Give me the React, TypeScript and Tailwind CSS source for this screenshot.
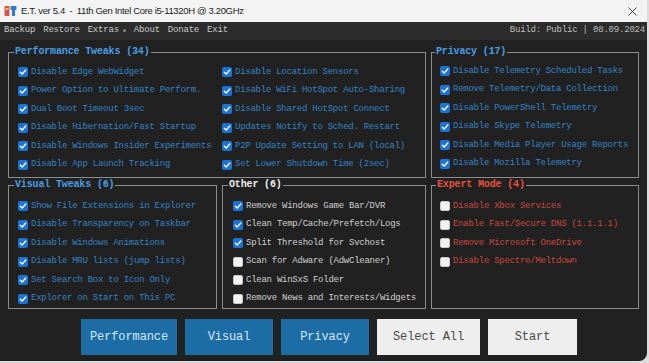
import React from "react";

type Item = { label: string; checked: boolean };

const perfCol1: string[] = [
  "Disable Edge WebWidget",
  "Power Option to Ultimate Perform.",
  "Dual Boot Timeout 3sec",
  "Disable Hibernation/Fast Startup",
  "Disable Windows Insider Experiments",
  "Disable App Launch Tracking",
];
const perfCol2: string[] = [
  "Disable Location Sensors",
  "Disable WiFi HotSpot Auto-Sharing",
  "Disable Shared HotSpot Connect",
  "Updates Notify to Sched. Restart",
  "P2P Update Setting to LAN (local)",
  "Set Lower Shutdown Time (2sec)",
];
const privacy: string[] = [
  "Disable Telemetry Scheduled Tasks",
  "Remove Telemetry/Data Collection",
  "Disable PowerShell Telemetry",
  "Disable Skype Telemetry",
  "Disable Media Player Usage Reports",
  "Disable Mozilla Telemetry",
];
const visual: string[] = [
  "Show File Extensions in Explorer",
  "Disable Transparency on Taskbar",
  "Disable Windows Animations",
  "Disable MRU lists (jump lists)",
  "Set Search Box to Icon Only",
  "Explorer on Start on This PC",
];
const other: Item[] = [
  { label: "Remove Windows Game Bar/DVR", checked: true },
  { label: "Clean Temp/Cache/Prefetch/Logs", checked: true },
  { label: "Split Threshold for Svchost", checked: true },
  { label: "Scan for Adware (AdwCleaner)", checked: false },
  { label: "Clean WinSxS Folder", checked: false },
  { label: "Remove News and Interests/Widgets", checked: false },
];
const expert: string[] = [
  "Disable Xbox Services",
  "Enable Fast/Secure DNS (1.1.1.1)",
  "Remove Microsoft OneDrive",
  "Disable Spectre/Meltdown",
];

function Box({ checked }: { checked: boolean }) {
  if (checked) {
    return (
      <span className="flex h-[10px] w-[10px] shrink-0 items-center justify-center rounded-[2px] bg-[#1b74d4]">
        <svg width="8" height="8" viewBox="0 0 8 8" fill="none">
          <path d="M1.3 4.2 L3.2 6 L6.8 2" stroke="#ffffff" strokeWidth="1.3" strokeLinecap="round" strokeLinejoin="round" />
        </svg>
      </span>
    );
  }
  return <span className="h-[10px] w-[10px] shrink-0 rounded-[2px] border border-[#c8c8c8] bg-[#f2f2f2]" />;
}

function Row({ label, checked, color }: { label: string; checked: boolean; color: string }) {
  return (
    <div className="flex h-[18.5px] items-center gap-[3px]">
      <Box checked={checked} />
      <span className={"whitespace-nowrap text-[9px] tracking-[-0.25px] " + color}>{label}</span>
    </div>
  );
}

export default function App() {
  const blue = "text-[#3383c6]";
  const red = "text-[#c9473d]";
  const gray = "text-[#cfcfcf]";
  return (
    <div className="h-[363px] w-[649px] overflow-hidden bg-[#dcdcdc] font-['Liberation_Mono','DejaVu_Sans_Mono',monospace]">
      <div className="flex h-[361px] w-[647px] flex-col overflow-hidden rounded-br-[8px] bg-[#212121]">
        {/* Title bar */}
        <div className="flex h-[22px] shrink-0 items-center bg-[#f3f3f3] pl-[4px] pr-[8px] font-['Liberation_Sans','Noto_Sans',sans-serif] text-[9.5px] tracking-[-0.35px] text-[#1b1b1b]">
          <svg width="13" height="12" viewBox="0 0 13 12" className="shrink-0">
            <rect x="0.5" y="1" width="5" height="10" rx="1" fill="#d9534f" />
            <rect x="6.5" y="1" width="6" height="4" rx="1" fill="#2b7bd0" />
            <rect x="8" y="5" width="3" height="6" fill="#2b7bd0" />
            <rect x="1.5" y="3" width="3" height="2" fill="#f6c343" />
          </svg>
          <span className="ml-[4px] whitespace-pre">E.T. ver 5.4  -  11th Gen Intel Core i5-11320H @ 3.20GHz</span>
          <div className="flex-1" />
          <svg width="9" height="9" viewBox="0 0 9 9" className="mr-[2px]">
            <path d="M0.5 0.5 L8.5 8.5 M8.5 0.5 L0.5 8.5" stroke="#333" strokeWidth="0.9" />
          </svg>
        </div>

        {/* Menu bar */}
        <div className="flex h-[18px] shrink-0 items-center bg-[#2c2c2c] pl-[4px] pr-[2px] text-[9px] tracking-[-0.2px] text-[#c9c9c9]">
          <div className="flex items-center gap-[8px]">
            <span>Backup</span>
            <span>Restore</span>
            <span className="flex items-center gap-[4px]">
              <span>Extras</span>
              <span className="mb-[1px] h-[3px] w-[3px] rounded-full bg-[#8a8a8a]" />
            </span>
            <span>About</span>
            <span>Donate</span>
            <span>Exit</span>
          </div>
          <div className="flex-1" />
          <span className="whitespace-pre text-[#bdbdbd]">Build: Public | 08.09.2024</span>
        </div>

        {/* Body */}
        <div className="flex flex-col px-[8px] pt-[6px]">
          <div className="flex gap-[5px]">
            <fieldset className="h-[132px] w-[420px] border border-[#8c8c8c]">
              <legend className="ml-[5px] px-[1px] text-[10px] font-bold leading-[12px] tracking-[-0.15px] text-[#4a9de4]">
                Performance Tweaks (34)
              </legend>
              <div className="flex pl-[9px] pt-[5px]">
                <div className="flex w-[204px] flex-col">
                  {perfCol1.map((l) => (
                    <Row key={l} label={l} checked color={blue} />
                  ))}
                </div>
                <div className="flex flex-col">
                  {perfCol2.map((l) => (
                    <Row key={l} label={l} checked color={blue} />
                  ))}
                </div>
              </div>
            </fieldset>
            <fieldset className="h-[132px] w-[209px] border border-[#8c8c8c]">
              <legend className="ml-[3px] px-[1px] text-[10px] font-bold leading-[12px] tracking-[-0.15px] text-[#4a9de4]">
                Privacy (17)
              </legend>
              <div className="flex flex-col pl-[8px] pt-[4px]">
                {privacy.map((l) => (
                  <Row key={l} label={l} checked color={blue} />
                ))}
              </div>
            </fieldset>
          </div>

          <div className="mt-[1px] flex gap-[5px]">
            <fieldset className="h-[130px] w-[210px] border border-[#8c8c8c]">
              <legend className="ml-[5px] px-[1px] text-[10px] font-bold leading-[12px] tracking-[-0.15px] text-[#4a9de4]">
                Visual Tweaks (6)
              </legend>
              <div className="flex flex-col pl-[9px] pt-[6px]">
                {visual.map((l) => (
                  <Row key={l} label={l} checked color={blue} />
                ))}
              </div>
            </fieldset>
            <fieldset className="h-[130px] w-[205px] border border-[#8c8c8c]">
              <legend className="ml-[5px] px-[1px] text-[10px] font-bold leading-[12px] tracking-[-0.15px] text-[#f0f0f0]">
                Other (6)
              </legend>
              <div className="flex flex-col pl-[10px] pt-[6px]">
                {other.map((it) => (
                  <Row key={it.label} label={it.label} checked={it.checked} color={gray} />
                ))}
              </div>
            </fieldset>
            <fieldset className="h-[130px] w-[209px] border border-[#8c8c8c]">
              <legend className="ml-[4px] px-[1px] text-[10px] font-bold leading-[12px] tracking-[-0.15px] text-[#e8503e]">
                Expert Mode (4)
              </legend>
              <div className="flex flex-col pl-[8px] pt-[6px]">
                {expert.map((l) => (
                  <Row key={l} label={l} checked={false} color={red} />
                ))}
              </div>
            </fieldset>
          </div>

          {/* Buttons */}
          <div className="mt-[10px] flex gap-[8px] pl-[73px] text-[12px] tracking-[-0.1px]">
            <button className="flex h-[36px] w-[96px] items-center justify-center bg-[#1c6da6] text-[#d6e8f5]">Performance</button>
            <button className="flex h-[36px] w-[88px] items-center justify-center bg-[#1c6da6] text-[#d6e8f5]">Visual</button>
            <button className="flex h-[36px] w-[88px] items-center justify-center bg-[#1c6da6] text-[#d6e8f5]">Privacy</button>
            <button className="flex h-[36px] w-[103px] items-center justify-center bg-[#eeeeee] text-[#4a4a4a]">Select All</button>
            <button className="flex h-[36px] w-[89px] items-center justify-center bg-[#eeeeee] text-[#4a4a4a]">Start</button>
          </div>
        </div>
      </div>
    </div>
  );
}
